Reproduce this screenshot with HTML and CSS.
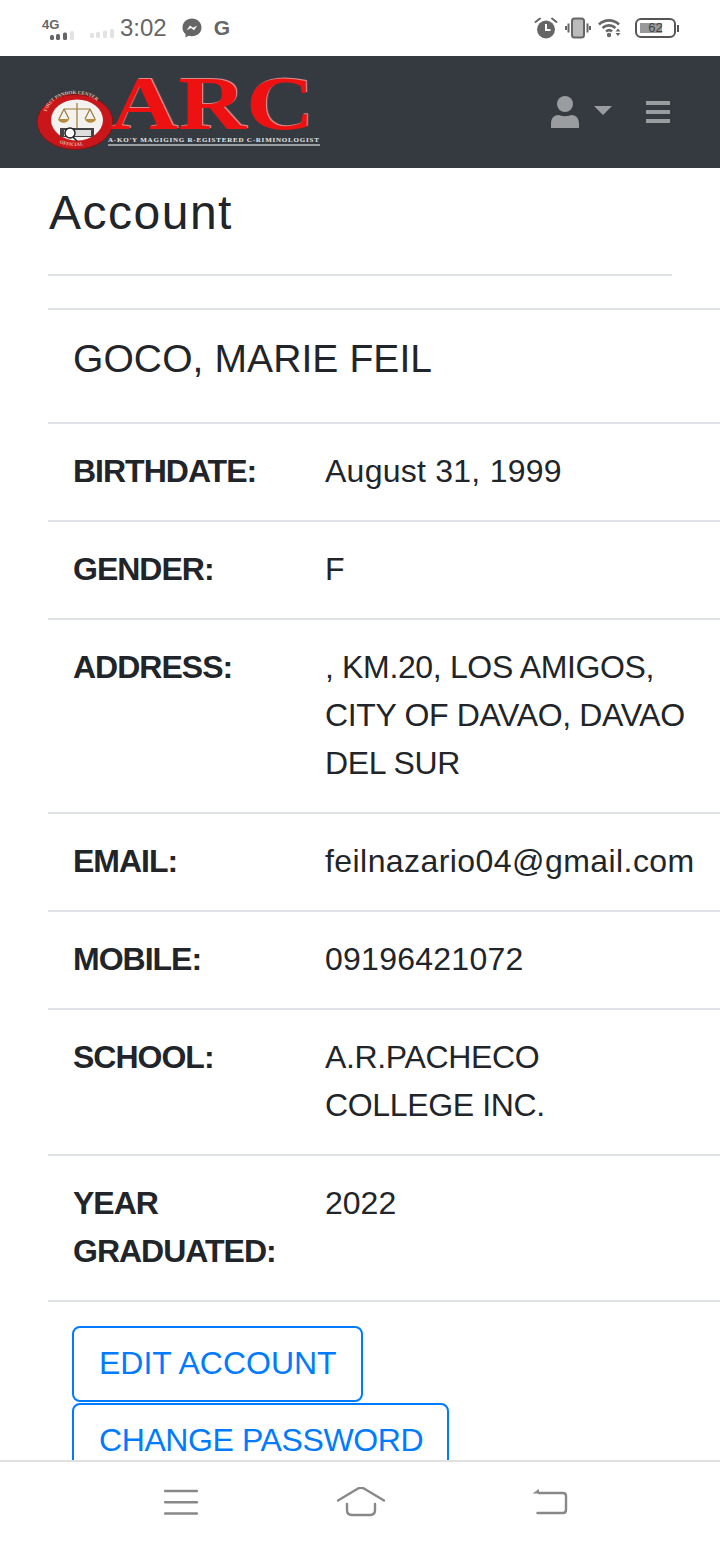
FILE: index.html
```html
<!DOCTYPE html>
<html lang="en">
<head>
    <meta charset="UTF-8">
    <meta name="viewport" content="width=device-width, initial-scale=1.0">
    <title>Account</title>
    <link rel="stylesheet" href="styles.css">
</head>
<body>

    <!-- Phone status bar -->
    <div class="status-bar">
        <div class="status-left">
            <div class="net-block">
                <span class="net-label">4G</span>
                <svg class="signal" width="24" height="9" viewBox="0 0 24 9">
                    <rect x="0" y="4" width="4" height="5" rx="1.500" fill="#666"/>
                    <rect x="6" y="3" width="4" height="6" rx="1.500" fill="#666"/>
                    <rect x="13" y="1.500" width="4" height="7.500" rx="1.500" fill="#666"/>
                    <rect x="20" y="0" width="4" height="9" rx="1.500" fill="#e2e2e2"/>
                </svg>
            </div>
            <svg class="signal signal-off" width="24" height="9" viewBox="0 0 24 9">
                <rect x="0" y="4" width="4" height="5" rx="1.500" fill="#e2e2e2"/>
                <rect x="6" y="3" width="4" height="6" rx="1.500" fill="#e2e2e2"/>
                <rect x="13" y="1.500" width="4" height="7.500" rx="1.500" fill="#e2e2e2"/>
                <rect x="20" y="0" width="4" height="9" rx="1.500" fill="#e2e2e2"/>
            </svg>
            <span class="clock">3:02</span>
            <svg class="messenger" width="20" height="20" viewBox="0 0 20 20">
                <path d="M10 .5C4.600.5.500 4.400.500 9.500c0 2.700 1.100 5 3 6.600V19.500l3.100-1.700c1.100.3 2.200.5 3.400.5 5.400 0 9.500-3.900 9.500-8.800S15.400.500 10 .5z" fill="#666"/>
                <path d="M4.700 12.300 8 7.500l3 2.300 4.300-2.400-3.300 4.900-3-2.300z" fill="#fff"/>
            </svg>
            <span class="g-mark">G</span>
        </div>
        <div class="status-right">
            <svg width="24" height="22" viewBox="0 0 24 22">
                <circle cx="12" cy="12.500" r="9" fill="#666"/>
                <path d="M12 7v6h4.500" fill="none" stroke="#fff" stroke-width="2"/>
                <path d="M1.500 5 6 1.500M22.500 5 18 1.500" stroke="#666" stroke-width="2" stroke-linecap="round"/>
            </svg>
            <svg width="26" height="22" viewBox="0 0 26 22">
                <rect x="7" y="1.500" width="12" height="19" rx="2.500" fill="#bbb" stroke="#666" stroke-width="2"/>
                <path d="M3.500 6.500v9M1 9v4M22.500 6.500v9M25 9v4" stroke="#666" stroke-width="2"/>
            </svg>
            <svg width="25" height="20" viewBox="0 0 25 20">
                <path d="M1 6.500C6.500 1 15.500 1 21 6.500M4.500 10c3.800-3.500 9.200-3.500 13 0M8 13.500c2-1.700 4.300-1.700 6 0" fill="none" stroke="#666" stroke-width="2.600"/>
                <circle cx="11" cy="17" r="2.200" fill="#666"/>
                <path d="M20 10.500l2.500 3h-5zM17.500 15h5l-2.500 3z" fill="#666"/>
            </svg>
            <div class="battery">
                <div class="battery-body">
                    <div class="battery-fill"></div>
                    <span class="battery-num">62</span>
                </div>
                <div class="battery-tip"></div>
            </div>
        </div>
    </div>

    <!-- Navbar -->
    <nav class="navbar">
        <svg class="logo" width="286" height="104" viewBox="0 -13 286 104">
            <defs>
                <path id="ring-top" d="M9 50C9 30 22 21 39 21s30 9 30 29"/>
                <path id="ring-bottom" d="M10 56c4 12 16 17 29 17s24-5 28-17"/>
            </defs>
            <ellipse cx="39" cy="49" rx="38" ry="27.500" fill="#c8161b" stroke="#7e1512"/>
            <ellipse cx="41" cy="47" rx="26" ry="20.500" fill="#f4f2ee"/>
            <text class="logo-ring"><textPath href="#ring-top" startOffset="12%">FIRST PANDOK CENTER</textPath></text>
            <text class="logo-ring"><textPath href="#ring-bottom" startOffset="28%">OFFICIAL</textPath></text>
            <path d="M41 30v25M28 36h26M28 36l-5 10M28 36l5 10M54 36l-5 10M54 36l5 10" fill="none" stroke="#9a7a3a" stroke-width="1.200"/>
            <path d="M22 46c1 5 10 5 11 0zM49 46c1 5 10 5 11 0z" fill="#b48c3e"/>
            <path d="M24 55h34v9H24z" fill="#444"/>
            <rect x="28" y="57" width="27" height="6" fill="#ddd"/>
            <circle cx="34" cy="60" r="5" fill="#fff" stroke="#222" stroke-width="1.500"/>
            <path d="M37 64l4 4" stroke="#222" stroke-width="1.500"/>
            <text class="logo-arc" transform="translate(74 56) scale(1.24 1)">ARC</text>
            <text class="logo-tag" x="72" y="69">A-KO'Y MAGIGING R-EGISTERED C-RIMINOLOGIST</text>
            <rect x="72" y="71.500" width="212" height="1" fill="#fff"/>
        </svg>
        <div class="nav-right">
            <svg class="user-icon" width="28" height="32" viewBox="0 0 28 32">
                <circle cx="14" cy="8" r="8" fill="#9a9da0"/>
                <path d="M0 32v-4c0-6 3-9 8-9 2 1.500 10 1.500 12 0 5 0 8 3 8 9v4z" fill="#9a9da0"/>
            </svg>
            <div class="caret"></div>
            <div class="burger">
                <span></span><span></span><span></span>
            </div>
        </div>
    </nav>

    <!-- Contenu -->
    <main class="content">
        <h3 class="page-title">Account</h3>
        <hr class="title-rule">
        <table class="info-table">
            <colgroup>
                <col class="col-label">
                <col class="col-value">
            </colgroup>
            <tr>
                <td colspan="2" class="name-cell"><h5 class="name">GOCO, MARIE FEIL</h5></td>
            </tr>
            <tr><th>BIRTHDATE:</th><td class="val-text">August 31, 1999</td></tr>
            <tr><th>GENDER:</th><td>F</td></tr>
            <tr><th>ADDRESS:</th><td class="val-caps">, KM.20, LOS AMIGOS, CITY OF DAVAO, DAVAO DEL SUR</td></tr>
            <tr><th>EMAIL:</th><td class="val-mail">feilnazario04@gmail.com</td></tr>
            <tr><th>MOBILE:</th><td class="val-text">09196421072</td></tr>
            <tr><th>SCHOOL:</th><td class="val-caps">A.R.PACHECO<br>COLLEGE INC.</td></tr>
            <tr><th>YEAR GRADUATED:</th><td>2022</td></tr>
            <tr>
                <td colspan="2" class="action-cell">
                    <div class="actions">
                        <a class="btn-outline" href="#">EDIT ACCOUNT</a>
                        <a class="btn-outline btn-tight" href="#">CHANGE PASSWORD</a>
                    </div>
                </td>
            </tr>
        </table>
    </main>

    <!-- Android buttons -->
    <div class="bottom-nav">
        <svg class="nav-menu" width="34" height="28" viewBox="0 0 34 28">
            <path d="M1 2h32M1 13.300h32M1 24.500h32" stroke="#888" stroke-width="2.400" stroke-linecap="round"/>
        </svg>
        <svg class="nav-home" width="48" height="30" viewBox="0 0 48 30">
            <path d="M1 13.500 21 1.500c2-1 4-1 6 0l20 12" fill="none" stroke="#888" stroke-width="2.400" stroke-linecap="round"/>
            <path d="M10 17v6c0 3 2 5 5 5h18c3 0 5-2 5-5v-6" fill="none" stroke="#888" stroke-width="2.400" stroke-linecap="round"/>
        </svg>
        <svg class="nav-back" width="36" height="28" viewBox="0 0 36 28">
            <path d="M.5 4.500 7 0v4.500z" fill="#888"/>
            <path d="M7 4h24c2 0 3 1 3 3v14c0 2-1 3-3 3H5.500" fill="none" stroke="#888" stroke-width="2.400" stroke-linecap="round"/>
        </svg>
    </div>

</body>
</html>
```
FILE: styles.css
```css
* {
    box-sizing: border-box;
}

body {
    font-family: "Liberation Sans", Arial, sans-serif;
    background-color: #fff;
    color: #212529;
    margin: 0;
    width: 720px;
    height: 1544px;
    display: flex;
    flex-direction: column;
    overflow: hidden;
    font-size: 32px;
    line-height: 48px;
}

/* Status bar */
.status-bar {
    height: 56px;
    flex: none;
    display: flex;
    justify-content: space-between;
    align-items: center;
    padding: 0 41px 0 42px;
    color: #666;
}

.status-left, .status-right {
    display: flex;
    align-items: center;
}

.net-block {
    width: 32px;
    display: flex;
    flex-direction: column;
    align-items: flex-end;
    margin-top: 2px;
}

.net-label {
    align-self: flex-start;
    font-size: 13px;
    line-height: 12px;
    font-weight: bold;
}

.signal-off {
    margin: 11px 0 0 16px;
}

.clock {
    font-size: 24px;
    line-height: 30px;
    margin-left: 6px;
}

.messenger {
    margin-left: 15px;
}

.g-mark {
    font-size: 21px;
    line-height: 24px;
    font-weight: bold;
    margin-left: 12px;
}

.status-right {
    gap: 7px;
}

.battery {
    display: flex;
    align-items: center;
    margin-left: 5px;
}

.battery-body {
    position: relative;
    width: 41px;
    height: 20px;
    border: 2px solid #555;
    border-radius: 6px;
    display: flex;
    justify-content: center;
    align-items: center;
}

.battery-fill {
    position: absolute;
    left: 3px;
    top: 3px;
    bottom: 3px;
    width: 22px;
    background-color: #999;
}

.battery-num {
    position: relative;
    font-size: 13px;
    line-height: 14px;
    color: #444;
}

.battery-tip {
    width: 2px;
    height: 7px;
    background-color: #555;
    margin-left: 1px;
}

/* Navbar */
.navbar {
    height: 112px;
    flex: none;
    background-color: #343a40;
    display: flex;
    justify-content: space-between;
    align-items: center;
    padding: 0 50px 0 36px;
}

.logo-arc {
    font-family: "Liberation Serif", serif;
    font-size: 76px;
    font-weight: bold;
    fill: #ee1111;
    filter: drop-shadow(1.5px -1px 0 #d98a8a);
}

.logo-tag {
    font-family: "Liberation Serif", serif;
    font-size: 7px;
    font-weight: bold;
    letter-spacing: 0.78px;
    fill: #e8e8e8;
}

.logo-ring {
    font-family: "Liberation Serif", serif;
    font-size: 5px;
    font-weight: bold;
    fill: #e9b9a0;
}

.nav-right {
    display: flex;
    align-items: center;
}

.caret {
    width: 0;
    height: 0;
    margin-left: 15px;
    border-left: 9px solid transparent;
    border-right: 9px solid transparent;
    border-top: 9px solid #9a9da0;
    margin-top: -4px;
}

.burger {
    width: 24px;
    margin-left: 34px;
    display: flex;
    flex-direction: column;
    gap: 5px;
}

.burger span {
    height: 4px;
    background-color: #9a9da0;
}

/* Contenu */
.content {
    flex: 1;
    min-height: 0;
    overflow: hidden;
    padding-left: 48px;
}

.page-title {
    font-size: 48px;
    font-weight: 400;
    line-height: 58px;
    margin: 16px 0 32px 1px;
    letter-spacing: 1.5px;
}

.title-rule {
    width: 624px;
    height: 2px;
    border: 0;
    background-color: #dee2e6;
    margin: 0 0 32px;
}

.info-table {
    width: 672px;
    border-collapse: collapse;
    table-layout: fixed;
}

.col-label {
    width: 253px;
}

.info-table th,
.info-table td {
    border-top: 2px solid #dee2e6;
    padding: 23px 24px 25px;
    vertical-align: top;
    text-align: left;
}

.info-table th {
    font-weight: bold;
    letter-spacing: -1px;
    padding-left: 25px;
}

.info-table .name-cell {
    padding: 25px 24px 23px 25px;
}

.info-table .action-cell {
    padding: 24px;
}

.val-text {
    letter-spacing: 0.25px;
}

.val-mail {
    letter-spacing: 0.43px;
}

.val-caps {
    letter-spacing: -0.35px;
}

.name {
    font-size: 39px;
    font-weight: 400;
    line-height: 48px;
    letter-spacing: 0.1px;
    margin: 0 0 16px;
}

.actions {
    display: flex;
    flex-direction: column;
    align-items: flex-start;
    gap: 1px;
}

.btn-outline {
    display: block;
    padding: 11px 24px 13px 25px;
    border: 2px solid #007bff;
    border-radius: 8px;
    color: #007bff;
    text-decoration: none;
}

.btn-tight {
    letter-spacing: -0.4px;
}

/* Android buttons */
.bottom-nav {
    height: 84px;
    flex: none;
    position: relative;
    background-color: #fff;
    border-top: 2px solid #e0e0e0;
    display: flex;
    align-items: center;
    padding-left: 164px;
}

.nav-home {
    margin-left: 139px;
    margin-top: -2px;
}

.nav-back {
    margin-left: 147px;
}
```
